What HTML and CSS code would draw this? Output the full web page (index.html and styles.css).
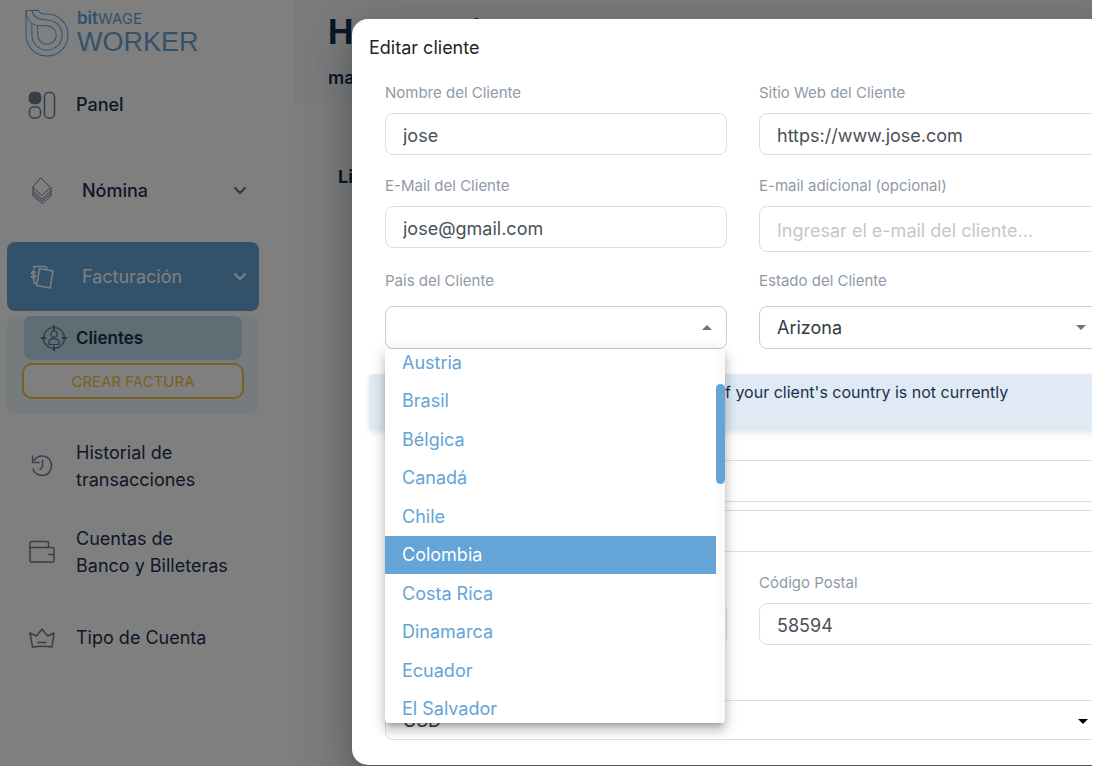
FILE: index.html
```html
<!DOCTYPE html>
<html lang="es">
<head>
    <meta charset="utf-8">
    <title>Bitwage Worker - Clientes</title>
    <link rel="stylesheet" href="styles.css">
</head>
<body>
    <div class="app">
        <aside class="sidebar">
            <a href="#" class="logo">
                <svg class="logo-mark" viewBox="78 30 128 140" aria-hidden="true">
                    <path d="M81 35V106A61 61 0 1 0 142 45C129 45 119 42 117 34Z"/>
                    <path d="M98 72V106A44 44 0 1 0 142 62C120 62 102 56 98 35"/>
                    <path d="M81 35C82 62 98 79 128 79H142A27 27 0 1 1 115 106V78"/>
                </svg>
                <span class="logo-text">
                    <span class="logo-top"><b>bit</b>WAGE</span>
                    <span class="logo-bottom">WORKER</span>
                </span>
            </a>

            <nav>
                <ul class="menu">
                    <li>
                        <a href="#" class="menu-item strong">
                            <svg class="icon" viewBox="0 0 32 32" aria-hidden="true">
                                <rect x="3.500" y="3.500" width="11" height="11" rx="4" fill="currentColor"/>
                                <rect x="3.500" y="18" width="11" height="11" rx="4"/>
                                <rect x="18.500" y="3.500" width="10" height="25.500" rx="4"/>
                            </svg>
                            <span>Panel</span>
                        </a>
                    </li>
                    <li>
                        <a href="#" class="menu-item group strong">
                            <svg class="icon thin" viewBox="0 0 32 32" aria-hidden="true">
                                <path d="M15 3L24.500 12.500 16 20.500 7 12.500Z"/>
                                <path d="M7 12.500V16L16 24 25 16V12.500M7 15.500V18.500L16 26 25 18.500V15.500M7 18.500V21L16.500 28.500 25 21V18.500"/>
                            </svg>
                            <span>Nómina</span>
                            <svg class="chevron" viewBox="0 0 14 9" aria-hidden="true"><path d="M1.500 1.500L7 7 12.500 1.500"/></svg>
                        </a>
                    </li>
                    <li>
                        <a href="#" class="menu-item group active">
                            <svg class="icon" viewBox="0 0 32 32" aria-hidden="true">
                                <path d="M13.500 7.500L27 10 24 27 10.500 24.500Z"/>
                                <path d="M8 7V5.500H20L21 8M8 19V22H10"/>
                                <path d="M9.500 11.500C9 10 5.500 10 5.500 12S9.500 13 9.500 15 6 17 5 15.500M7.500 9V18.500"/>
                            </svg>
                            <span>Facturación</span>
                            <svg class="chevron" viewBox="0 0 14 9" aria-hidden="true"><path d="M1.500 1.500L7 7 12.500 1.500"/></svg>
                        </a>
                        <div class="submenu">
                            <a href="#" class="submenu-item">
                                <svg class="target" viewBox="0 0 28 28" aria-hidden="true">
                                    <circle cx="14" cy="14" r="10.500"/>
                                    <circle cx="14" cy="10" r="3.200"/>
                                    <path d="M9 20.500V18C9 13.500 19 13.500 19 18V20.500Z"/>
                                    <path class="tick" d="M14 1V6M14 22V27M1 14H6M22 14H27"/>
                                </svg>
                                <span>Clientes</span>
                            </a>
                            <button type="button" class="create">CREAR FACTURA</button>
                        </div>
                    </li>
                    <li>
                        <a href="#" class="menu-item">
                            <svg class="icon" viewBox="0 0 32 32" aria-hidden="true">
                                <path d="M8 10.500C12 4.500 21 4.500 24.500 11 28 19 22 25.500 16.500 25.500 11.500 25.500 8 22.500 7 19"/>
                                <path d="M6.500 6V12.500H13M16.500 10.500V15.500C16.500 17.500 15.500 18.500 14 19.500"/>
                            </svg>
                            <span>Historial de transacciones</span>
                        </a>
                    </li>
                    <li>
                        <a href="#" class="menu-item">
                            <svg class="icon" viewBox="0 0 32 32" aria-hidden="true">
                                <path d="M4 11.500V7Q4 5.500 5.500 5.500H20.500Q22.500 5.500 22.500 7V11.500"/>
                                <path d="M4 11.500H26.500Q28 11.500 28 13V24.500Q28 26 26.500 26H5.500Q4 26 4 24.500ZM23 18.500H28"/>
                            </svg>
                            <span>Cuentas de<br>Banco y Billeteras</span>
                        </a>
                    </li>
                    <li>
                        <a href="#" class="menu-item">
                            <svg class="icon" viewBox="0 0 32 32" aria-hidden="true">
                                <path d="M4 11L10.500 14 16 7 21.500 14 28 11 26 25Q16 23.500 6.500 25ZM12 20.500H20"/>
                            </svg>
                            <span>Tipo de Cuenta</span>
                        </a>
                    </li>
                </ul>
            </nav>
        </aside>

        <main class="content">
            <header class="welcome">
                <h1>Hola, Juli</h1>
                <p>ma</p>
            </header>
            <h2 class="list-title">Lista</h2>
        </main>

        <div class="backdrop">
            <form class="dialog" role="dialog" aria-labelledby="dialog-title">
                <h2 class="dialog-title" id="dialog-title">Editar cliente</h2>

                <div class="fields">
                    <div class="field">
                        <label for="name">Nombre del Cliente</label>
                        <input id="name" type="text" value="jose">
                    </div>
                    <div class="field">
                        <label for="site">Sitio Web del Cliente</label>
                        <input id="site" type="text" value="https://www.jose.com">
                    </div>
                    <div class="field">
                        <label for="email">E-Mail del Cliente</label>
                        <input id="email" type="email" value="jose@gmail.com">
                    </div>
                    <div class="field">
                        <label for="email2">E-mail adicional (opcional)</label>
                        <input id="email2" class="tall" type="email" placeholder="Ingresar el e-mail del cliente...">
                    </div>
                    <div class="field select-field">
                        <label for="country">Pais del Cliente</label>
                        <div class="select-box open">
                            <button type="button" id="country" class="control" aria-haspopup="listbox" aria-expanded="true"></button>
                            <div class="dropdown">
                                <ul class="options" role="listbox" aria-label="Pais del Cliente">
                                    <li role="option">Austria</li>
                                    <li role="option">Brasil</li>
                                    <li role="option">Bélgica</li>
                                    <li role="option">Canadá</li>
                                    <li role="option">Chile</li>
                                    <li role="option" class="selected" aria-selected="true">Colombia</li>
                                    <li role="option">Costa Rica</li>
                                    <li role="option">Dinamarca</li>
                                    <li role="option">Ecuador</li>
                                    <li role="option">El Salvador</li>
                                </ul>
                                <div class="track"><div class="thumb"></div></div>
                            </div>
                        </div>
                    </div>
                    <div class="field select-field">
                        <label for="state">Estado del Cliente</label>
                        <div class="select-box">
                            <select id="state" class="control"><option>Arizona</option></select>
                        </div>
                    </div>
                </div>

                <div class="notice">f your client's country is not currently</div>

                <div class="address">
                    <input type="text" aria-label="Dirección">
                    <input type="text" aria-label="Dirección 2">
                </div>

                <div class="fields last">
                    <div class="field no-label">
                        <input type="text" aria-label="Ciudad">
                    </div>
                    <div class="field">
                        <label for="zip">Código Postal</label>
                        <input id="zip" type="text" value="58594">
                    </div>
                </div>

                <div class="select-box currency">
                    <select class="control" aria-label="Moneda"><option>USD</option></select>
                </div>
            </form>
        </div>
    </div>
</body>
</html>
```
FILE: styles.css
```css
* { box-sizing: border-box; }
body {
    margin: 0;
    padding-right: 14px;
    background: white;
    font-family: Inter, "Open Sans", sans-serif;
    font-size: 18px;
    color: #1b2f4f;
}
ul { list-style: none; margin: 0; padding: 0; }
a { color: inherit; text-decoration: none; }
h1, h2, p { margin: 0; }
input, select, button { font: inherit; color: inherit; }
svg { fill: none; stroke: currentColor; flex: none; }

.app {
    position: relative;
    display: flex;
    min-height: 100vh;
    overflow: hidden;
}

/* Sidebar */
.sidebar {
    width: 294px;
    flex: none;
    padding: 8px 35px 0 7px;
    background: #fff;
}
.logo {
    display: flex;
    gap: 8px;
    height: 62px;
    padding-left: 18px;
    color: #64a4d6;
}
.logo-mark { width: 44px; height: 50px; stroke-width: 3; }
.logo-text { display: flex; flex-direction: column; }
.logo-top { font-size: 15px; line-height: 20px; }
.logo-top b { font-size: 17px; font-weight: 600; }
.logo-bottom {
    font-family: "Liberation Sans", Arial, sans-serif;
    font-size: 27px;
    line-height: 26px;
}
.menu { display: flex; flex-direction: column; gap: 17px; }
.menu-item {
    display: flex;
    align-items: center;
    gap: 18px;
    height: 69px;
    padding: 0 12px 0 19px;
    border-radius: 8px;
    line-height: 27px;
}
.strong { font-weight: 500; }
.group { gap: 24px; }
.icon { width: 32px; height: 32px; color: #717b94; stroke-width: 1.5; stroke-linejoin: round; stroke-linecap: round; }
.thin { stroke-width: 1; }
.chevron { width: 14px; height: 9px; margin-left: auto; color: #626c80; stroke-width: 2; }
.active { background: #64a4d6; color: #fff; }
.active .icon, .active .chevron { color: #fff; }
.submenu {
    display: flex;
    flex-direction: column;
    gap: 3px;
    margin-top: 5px;
    padding: 0 15px 15px;
    border-radius: 8px;
    background: #edf6fa;
}
.submenu-item {
    display: flex;
    align-items: center;
    gap: 8px;
    height: 44px;
    margin: 0 2px;
    padding-left: 16px;
    border-radius: 8px;
    background: #bedaea;
    font-size: 17px;
    font-weight: 600;
}
.target { width: 28px; height: 28px; color: #5a6f88; stroke-width: 1.2; }
.tick { stroke-width: 2; }
.create {
    height: 36px;
    padding: 0;
    border: 2px solid #f5c242;
    border-radius: 10px;
    background: #fff;
    color: #f5c242;
    font-size: 15px;
}

/* Page behind the dialog */
.content { flex: 1; background: #f9fcfd; }
.welcome {
    height: 103px;
    padding: 12px 34px;
    background: linear-gradient(90deg, #f1f6fa, #f6f6f6 12%);
}
.welcome h1 { font-size: 34px; line-height: 40px; }
.welcome p { margin-top: 14px; line-height: 24px; font-weight: 600; }
.list-title { padding: 62px 44px; font-size: 18px; line-height: 24px; }

/* Dialog */
.backdrop {
    position: absolute;
    inset: 0;
    padding: 19px 0 2px 352px;
    background: rgba(0,0,0,0.5);
}
.dialog {
    margin-right: -42px;
    padding: 17px 17px 25px;
    border-radius: 16px;
    background: #fff;
    box-shadow: 0 11px 15px -7px rgba(0,0,0,0.2), 0 24px 38px 3px rgba(0,0,0,0.14), 0 9px 46px 8px rgba(0,0,0,0.12);
}
.dialog-title { font-size: 18px; line-height: 24px; font-weight: 400; color: #212529; }
.fields {
    display: grid;
    grid-template-columns: 1fr 1fr;
    column-gap: 32px;
    padding: 12px 16px 0;
}
.field { padding: 6px 0 10px; }
.field label {
    display: block;
    padding-bottom: 6px;
    font-size: 15px;
    line-height: 29px;
    color: #8f9aa6;
}
.field input, .address input {
    display: block;
    width: 100%;
    height: 42px;
    padding: 2px 17px 0;
    border: 1px solid #dcdee0;
    border-radius: 8px;
    background: #fff;
    color: #495057;
    outline: none;
}
.field input.tall { height: 46px; }
.field input::placeholder { color: #c4c7ce; opacity: 1; }
.field:nth-child(n+3) { padding-bottom: 0; }
.field.select-field { padding-top: 14px; }
.select-field label { padding-bottom: 11px; }
.select-box { position: relative; }
.control {
    display: block;
    width: 100%;
    height: 43px;
    padding: 0 17px;
    border: 1px solid #c9ccd1;
    border-radius: 8px;
    background: #fff;
    color: #343a40;
    appearance: none;
}
.select-box::after {
    content: "";
    position: absolute;
    top: 19px;
    right: 15px;
    border: 5px solid transparent;
    border-top-color: #737373;
    border-bottom: 0;
}
.select-box.open::after { border-top: 0; border-bottom: 5px solid #737373; }

.dropdown {
    position: absolute;
    z-index: 1;
    top: 100%;
    left: 0;
    right: 2px;
    display: flex;
    height: 374px;
    border-radius: 4px;
    overflow: hidden;
    background: #fff;
    box-shadow: 0 5px 5px -3px rgba(0,0,0,0.2), 0 8px 10px 1px rgba(0,0,0,0.14), 0 3px 14px 2px rgba(0,0,0,0.12);
}
.options {
    flex: 1;
    display: grid;
    grid-auto-rows: 1fr;
    height: 385px;
    margin-top: -6px;
    color: #64a4d6;
}
.options li { display: flex; align-items: center; padding: 0 17px; }
.options .selected { background: #64a4d6; color: #fff; }
.track { width: 9px; padding-top: 35px; background: #fafafa; }
.thumb { height: 100px; border-radius: 5px; background: #64a4d6; }

.notice {
    height: 56px;
    margin-top: 25px;
    padding: 6px 0 0 356px;
    border-radius: 5px;
    background: #e0eaf5;
    box-shadow: 0 3px 6px rgba(0,0,0,0.1);
    font-size: 16px;
    line-height: 24px;
}
.address { display: grid; gap: 8px; padding: 30px 16px 0; }
.last { padding-top: 10px; }
.last .field { padding: 6px 0 0; }
.last .no-label { padding-top: 41px; }
.currency { margin: 55px 16px 0; }
.currency .control { height: 40px; border-color: #dcdee0; }
.currency::after { right: 13px; border-top-color: #000; }
```
